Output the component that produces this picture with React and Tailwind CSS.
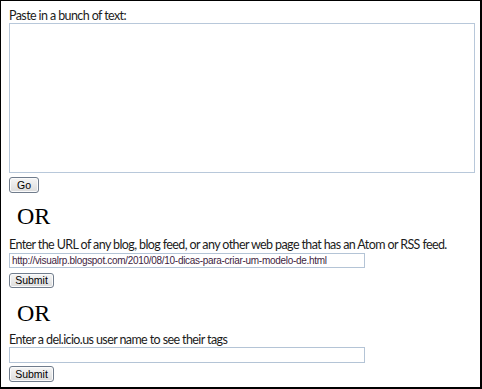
import React, { useState } from 'react'

export default function App() {
  const [text, setText] = useState('')
  const [url, setUrl] = useState('http://visualrp.blogspot.com/2010/08/10-dicas-para-criar-um-modelo-de.html')
  const [user, setUser] = useState('')

  const labelCls = "block h-[16px] leading-[18px] text-[12.5px] tracking-[-0.6px] whitespace-nowrap text-[#1c1c1c] font-['Lato',sans-serif]"
  const orCls = "h-[24px] leading-[24px] pl-[8px] text-[24px] text-black font-['Liberation_Serif',serif]"
  const btnCls =
    "block h-[15px] rounded-[3px] border border-[#707c8c] bg-gradient-to-b from-[#f6f6f6] to-[#dcdcdc] text-[10.5px] leading-[13px] text-black font-['Liberation_Sans',Arial,sans-serif] shadow-[inset_0_0_0_1px_#fbfbfb]"
  const inputCls =
    "block w-[356px] border border-[#b4c4d6] bg-white px-[2px] text-[10px] tracking-[-0.3px] text-[#3e1d3e] font-['Liberation_Sans',Arial,sans-serif] outline-none"

  return (
    <div className="w-[482px] h-[389px] bg-white border-t border-l border-r-2 border-b-2 border-black overflow-hidden">
      <div className="pl-[8px] pt-[6px]">
        <label className={labelCls}>Paste in a bunch of text:</label>
        <textarea
          value={text}
          onChange={(e) => setText(e.target.value)}
          className="block w-[466px] h-[150px] border border-[#b8c8da] bg-white resize-none outline-none"
        />
        <button className={`${btnCls} w-[30px] mt-[4px] h-[16px]`}>Go</button>

        <div className={`${orCls} mt-[11px]`}>OR</div>

        <label className={`${labelCls} mt-[8px]`}>
          Enter the URL of any blog, blog feed, or any other web page that has an Atom or RSS feed.
        </label>
        <input
          type="text"
          value={url}
          onChange={(e) => setUrl(e.target.value)}
          className={`${inputCls} h-[15px] mt-[1px]`}
        />
        <button className={`${btnCls} w-[45px] mt-[5px]`}>Submit</button>

        <div className={`${orCls} mt-[13px]`}>OR</div>

        <label className={`${labelCls} mt-[6px]`}>Enter a del.icio.us user name to see their tags</label>
        <input
          type="text"
          value={user}
          onChange={(e) => setUser(e.target.value)}
          className={`${inputCls} h-[16px]`}
        />
        <button className={`${btnCls} w-[45px] h-[16px] mt-[3px]`}>Submit</button>
      </div>
    </div>
  )
}
